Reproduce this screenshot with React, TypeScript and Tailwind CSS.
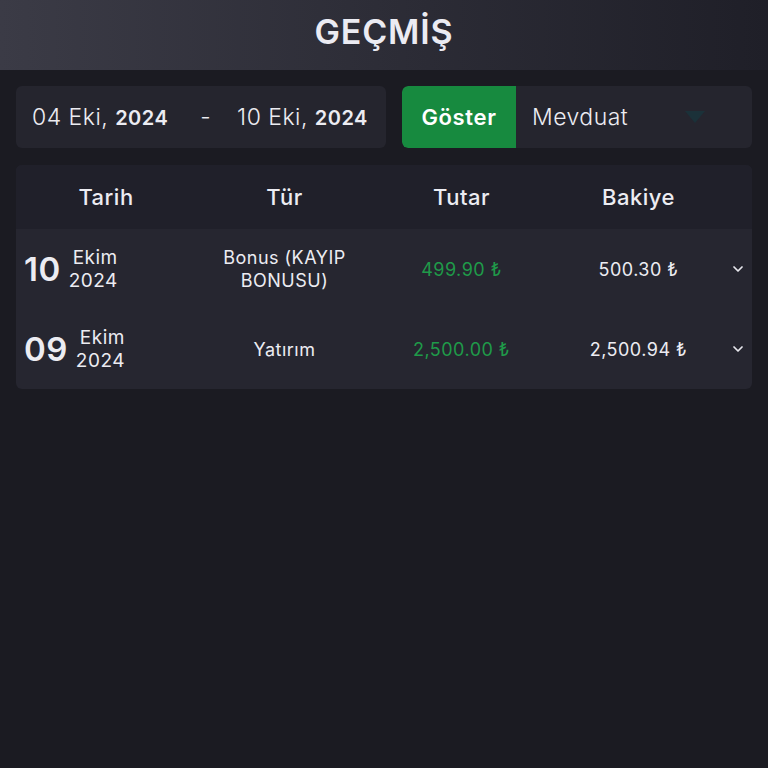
import React from "react";

type Row = {
  day: string;
  month: string;
  year: string;
  type: string;
  amount: string;
  balance: string;
};

const rows: Row[] = [
  { day: "10", month: "Ekim", year: "2024", type: "Bonus (KAYIP BONUSU)", amount: "499.90 ₺", balance: "500.30 ₺" },
  { day: "09", month: "Ekim", year: "2024", type: "Yatırım", amount: "2,500.00 ₺", balance: "2,500.94 ₺" },
];

function Chevron() {
  return (
    <svg width="16" height="16" viewBox="0 0 24 24" fill="none" stroke="#e8e8ee" strokeWidth="2.6" strokeLinecap="round" strokeLinejoin="round">
      <path d="M6 9l6 6 6-6" />
    </svg>
  );
}

export default function App() {
  return (
    <div
      className="min-h-[768px] w-full bg-[#1b1b22] text-[#ececf2] tracking-[0.03em]"
      style={{ fontFamily: "Inter, 'Noto Sans', sans-serif" }}
    >
      {/* header */}
      <div className="h-[70px] flex items-center justify-center bg-gradient-to-r from-[#3b3b46] to-[#1f1f28]">
        <h1 className="text-[34px] font-semibold tracking-wide text-[#ebebf2] pb-2">GEÇMİŞ</h1>
      </div>

      {/* filters */}
      <div className="flex gap-4 px-4 pt-4">
        <div className="w-[370px] h-[62px] rounded-md bg-[#25252e] flex items-center pl-4 text-[23px] font-light">
          <span>
            04 Eki, <b className="font-semibold text-[20px]">2024</b>
          </span>
          <span className="ml-[32px]">-</span>
          <span className="ml-[26px]">
            10 Eki, <b className="font-semibold text-[20px]">2024</b>
          </span>
        </div>
        <div className="flex-1 h-[62px] rounded-md bg-[#25252e] flex items-center overflow-hidden">
          <button className="h-full w-[114px] bg-[#178a3f] text-white text-[22px] font-semibold rounded-l-md tracking-[0.03em]">
            Göster
          </button>
          <span className="ml-4 text-[23px] font-light">Mevduat</span>
          <svg className="ml-[56px]" width="22" height="14" viewBox="0 0 22 14">
            <path d="M1 1h20L11 13z" fill="#1b3139" />
          </svg>
        </div>
      </div>

      {/* table */}
      <div className="mx-4 mt-[17px] rounded-md overflow-hidden bg-[#262630]">
        <div className="flex h-16 items-center bg-[#20202a] text-[22px] font-medium">
          <div className="w-[180px] text-center">Tarih</div>
          <div className="w-[177px] text-center">Tür</div>
          <div className="w-[177px] text-center">Tutar</div>
          <div className="w-[177px] text-center">Bakiye</div>
        </div>
        {rows.map((r) => (
          <div key={r.day} className="flex h-20 items-center">
            <div className="w-[180px] flex items-center pl-2 gap-[8px]">
              <span className="text-[33px] font-semibold leading-none">{r.day}</span>
              <span className="flex flex-col text-[19px] leading-[23px]">
                <span className="pl-1">{r.month}</span>
                <span>{r.year}</span>
              </span>
            </div>
            <div className="w-[177px] text-center text-[18px] leading-[23px] px-5">{r.type}</div>
            <div className="w-[177px] text-center text-[18px] text-[#1f9a49]">{r.amount}</div>
            <div className="w-[177px] text-center text-[18px]">{r.balance}</div>
            <div className="flex-1 flex justify-center pr-1">
              <Chevron />
            </div>
          </div>
        ))}
      </div>
    </div>
  );
}
